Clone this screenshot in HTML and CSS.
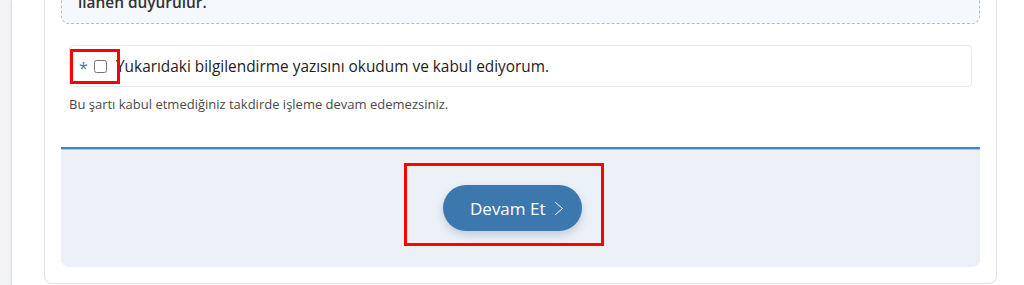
FILE: index.html
```html
<!DOCTYPE html>
<html lang="tr">
<head>
<meta charset="utf-8">
<title>Onay</title>
<link rel="stylesheet" href="styles.css">
</head>
<body>
<div class="page">
  <div class="card">
    <div class="notice">
      <p>Başvuru sonuçları ve ilgili tüm bilgilendirmeler, sistem üzerinden ve kurum internet sayfasında</p>
      <p>ilanen duyurulur.</p>
    </div>

    <div class="consent">
      <div class="consent-row">
        <span class="req">*</span>
        <input type="checkbox" class="check" id="onay">
        <label for="onay" class="consent-label">Yukarıdaki bilgilendirme yazısını okudum ve kabul ediyorum.</label>
        <span class="mark mark-check"></span>
      </div>
      <p class="hint">Bu şartı kabul etmediğiniz takdirde işleme devam edemezsiniz.</p>
    </div>

    <div class="footer">
      <div class="btn-wrap">
        <button class="btn" type="button">Devam Et
          <svg class="chev" width="10" height="15" viewBox="0 0 10 15"><path d="M1.5 1.5 L8.5 7.5 L1.5 13.5" fill="none" stroke="#fff" stroke-width="1" stroke-linecap="round" stroke-linejoin="round"/></svg>
        </button>
        <span class="mark mark-btn"></span>
      </div>
    </div>
  </div>
</div>
</body>
</html>
```

FILE: styles.css
```css
* { box-sizing: border-box; }

html, body {
  margin: 0;
  padding: 0;
}

body {
  background: #f3f4f6;
  font-family: "Open Sans", "Noto Sans", sans-serif;
  color: #222;
  height: 285px;
  overflow: hidden;
}

.page {
  display: flow-root;
  margin-left: 12px;
  background: #fff;
  min-height: 285px;
  padding: 0 27px 0 32px;
  box-shadow: -1px 0 2px rgba(0, 0, 0, 0.12);
}

.card {
  margin-top: -48px;
  border: 1px solid #e2e3e5;
  border-top: none;
  border-radius: 0 0 8px 8px;
  padding: 0 16px 16px;
}

.notice {
  background: #f5f8fc;
  border: 1px dashed #b9bec4;
  border-radius: 8px;
  padding: 14px 16px 8px;
  font-size: 15.4px;
  font-weight: 600;
  line-height: 24px;
  color: #333;
}

.notice p {
  margin: 0;
  white-space: nowrap;
  overflow: hidden;
}

.consent {
  padding: 0 8px;
  margin-top: 21px;
}

.consent-row {
  position: relative;
  display: flex;
  align-items: center;
  height: 42px;
  border: 1px solid #e8eaed;
  border-radius: 4px;
  padding-left: 9px;
}

.req {
  color: #3b7ab5;
  font-size: 16px;
  width: 12px;
  line-height: 1;
  margin-top: 4px;
}

.check {
  width: 13px;
  height: 13px;
  margin: 0 9px 0 3px;
  flex: none;
}

.consent-label {
  font-size: 15.4px;
  color: #222;
  white-space: nowrap;
}

.hint {
  margin: 8px 0 0;
  font-size: 13px;
  color: #4a4a4a;
  line-height: 18px;
}

.footer {
  margin-top: 34px;
  background: #ecf1f8;
  border-top: 2px solid #4a84ba;
  box-shadow: inset 0 1px 0 #a9c5e2;
  border-radius: 0 0 8px 8px;
  height: 120px;
  display: flex;
  justify-content: center;
  padding: 36px 16px 0 0;
}

.btn-wrap {
  position: relative;
  height: 46px;
}

.btn {
  display: flex;
  align-items: center;
  height: 46px;
  width: 139px;
  padding: 0 0 0 27px;
  border: none;
  border-radius: 23px;
  background: #3c77ad;
  color: #fff;
  font-family: "Open Sans", "Noto Sans", sans-serif;
  font-size: 17px;
  box-shadow: 0 4px 8px rgba(40, 70, 110, 0.22);
}

.chev {
  margin-left: 9px;
}

.mark {
  position: absolute;
  border: 3px solid #ff0000;
  pointer-events: none;
}

.mark-check {
  left: 0;
  top: 3px;
  width: 50px;
  height: 35px;
}

.mark-btn {
  left: -39px;
  top: -22px;
  width: 200px;
  height: 83px;
}
```
